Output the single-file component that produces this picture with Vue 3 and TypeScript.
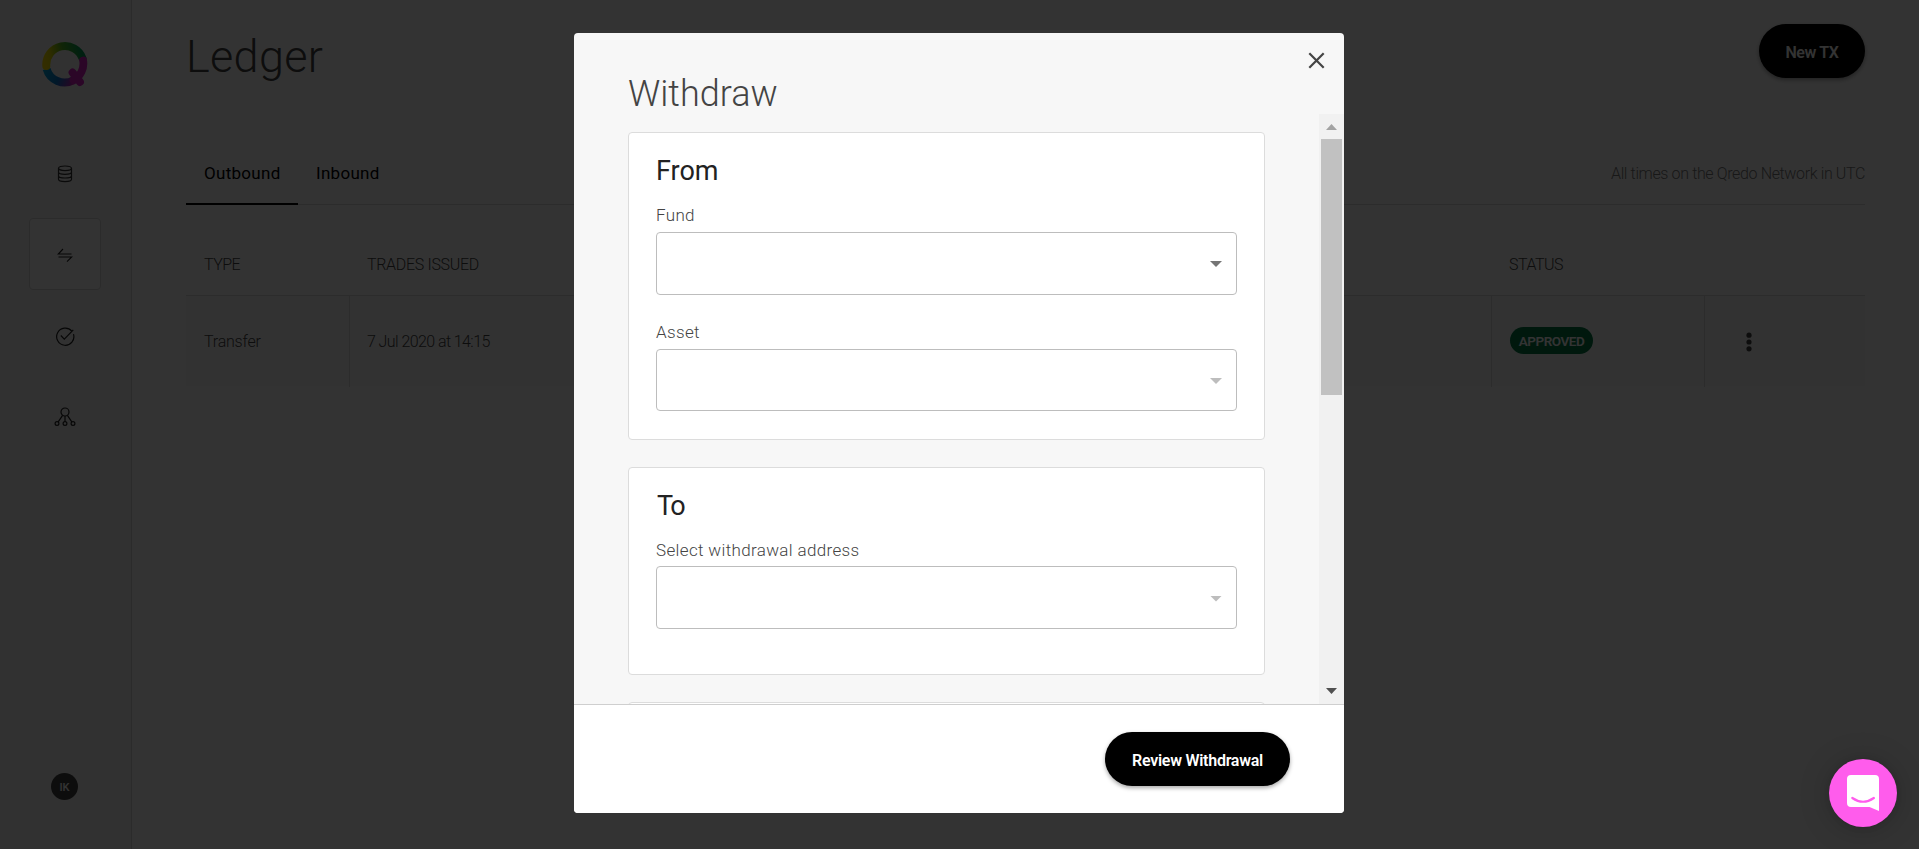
<script setup lang="ts">
interface Field {
  label: string
  disabled: boolean
  height: number
}

interface Section {
  title: string
  tone: string
  fields: Field[]
}

const sections: Section[] = [
  {
    title: 'From',
    tone: 'from',
    fields: [
      { label: 'Fund', disabled: false, height: 63 },
      { label: 'Asset', disabled: true, height: 62 },
    ],
  },
  {
    title: 'To',
    tone: 'to',
    fields: [{ label: 'Select withdrawal address', disabled: true, height: 63 }],
  },
]
</script>

<template>
  <div class="app">
    <aside class="sidebar">
      <svg class="logo" width="46" height="46" viewBox="0 0 46 46" fill="none">
        <defs>
          <linearGradient id="q-top" x1="4" y1="26" x2="41" y2="16" gradientUnits="userSpaceOnUse">
            <stop offset="0" stop-color="#ffe100" />
            <stop offset="0.2" stop-color="#e3dc00" />
            <stop offset="0.55" stop-color="#4fb521" />
            <stop offset="1" stop-color="#009d57" />
          </linearGradient>
          <linearGradient id="q-low" x1="4" y1="28" x2="32" y2="40" gradientUnits="userSpaceOnUse">
            <stop offset="0" stop-color="#00a0d8" />
            <stop offset="0.5" stop-color="#0878cc" />
            <stop offset="1" stop-color="#c51fb4" />
          </linearGradient>
        </defs>
        <path d="M4.600 28 A18.700 18.700 0 0 0 31.500 39.200" stroke="url(#q-low)" stroke-width="8" />
        <path d="M4.300 25 A18.700 18.700 0 0 1 40.600 17.500" stroke="url(#q-top)" stroke-width="8" stroke-linecap="round" />
        <path d="M41.100 19.500 A18.700 18.700 0 0 1 31.500 39.200 M30.500 31.500 L38 41" stroke="#d41fc0" stroke-width="7.800" stroke-linecap="round" />
      </svg>
      <nav class="nav">
        <a class="nav-item">
          <svg width="16" height="18" viewBox="0 0 16 18" fill="none" stroke="#333" stroke-width="1.200">
            <ellipse cx="8" cy="3.300" rx="6.500" ry="2.300" />
            <path d="M1.500 3.300v11c0 1.300 2.900 2.300 6.500 2.300s6.500-1 6.500-2.300v-11M1.500 7c0 1.300 2.900 2.300 6.500 2.300s6.500-1 6.500-2.300M1.500 10.700c0 1.300 2.900 2.300 6.500 2.300s6.500-1 6.500-2.300" />
          </svg>
        </a>
        <a class="nav-item active">
          <svg width="16" height="16" viewBox="0 0 16 16" fill="none" stroke="#222" stroke-width="1.100">
            <path d="M14.500 7H1.300L6 2" />
            <path d="M1.500 10h13.200L10 14.700" />
          </svg>
        </a>
        <a class="nav-item">
          <svg width="20" height="20" viewBox="0 0 20 20" fill="none" stroke="#222" stroke-width="1.200">
            <path d="M16.800 5.100A8.600 8.600 0 1 0 18.500 8.200" />
            <path d="M5.800 9.500l3.500 3.600 9-9.200" />
          </svg>
        </a>
        <a class="nav-item">
          <svg width="22" height="20" viewBox="0 0 22 20" fill="none" stroke="#222" stroke-width="1.200">
            <circle cx="11" cy="5" r="4" />
            <circle cx="3" cy="16.500" r="1.900" />
            <circle cx="11" cy="16.500" r="1.900" />
            <circle cx="19" cy="16.500" r="1.900" />
            <path d="M8.600 8.300L4.200 14.900M11 9v5.500M13.400 8.300l4.400 6.600" />
          </svg>
        </a>
      </nav>
      <div class="avatar">IK</div>
    </aside>

    <main class="main">
      <header class="header">
        <h1 class="title">Ledger</h1>
        <button class="btn new-tx">New TX</button>
      </header>
      <div class="tabs">
        <span class="tab outbound selected">Outbound</span>
        <span class="tab">Inbound</span>
        <span class="note">All times on the Qredo Network in UTC</span>
      </div>
      <div class="row head">
        <span class="type">TYPE</span>
        <span class="trades">TRADES ISSUED</span>
        <span class="status">STATUS</span>
        <span></span>
      </div>
      <div class="row body">
        <span class="cell">Transfer</span>
        <span class="cell date">7 Jul 2020 at 14:15</span>
        <span class="cell"><b class="badge">APPROVED</b></span>
        <span class="cell dots">
          <svg width="6" height="20" viewBox="0 0 6 20" fill="#444">
            <circle cx="3" cy="3.200" r="2.600" />
            <circle cx="3" cy="10" r="2.600" />
            <circle cx="3" cy="16.800" r="2.600" />
          </svg>
        </span>
      </div>
    </main>

    <div class="overlay">
      <section class="modal">
        <header class="modal-head">
          <h2 class="modal-title">Withdraw</h2>
          <svg class="close" width="17" height="17" viewBox="0 0 17 17" fill="none" stroke="#444" stroke-width="2.200">
            <path d="M1.300 1.300l14.400 14.400M15.700 1.300L1.300 15.700" />
          </svg>
        </header>
        <div class="modal-body">
          <div class="cards">
            <div v-for="s in sections" :key="s.title" class="card" :class="s.tone">
              <h3 class="card-title">{{ s.title }}</h3>
              <div v-for="f in s.fields" :key="f.label" class="field">
                <label class="label">{{ f.label }}</label>
                <div class="select" :class="{ disabled: f.disabled }" :style="{ height: f.height + 'px' }">
                  <i class="caret"></i>
                </div>
              </div>
            </div>
            <div class="card next"></div>
          </div>
          <div class="scrollbar">
            <i class="arrow up"></i>
            <i class="thumb"></i>
            <i class="arrow down"></i>
          </div>
        </div>
        <footer class="modal-foot">
          <button class="btn review">Review Withdrawal</button>
        </footer>
      </section>
    </div>

    <div class="chat">
      <svg width="34" height="38" viewBox="0 0 34 38">
        <path d="M5 1h24a4 4 0 0 1 4 4v32l-9.500-4H5a4 4 0 0 1-4-4V5a4 4 0 0 1 4-4z" fill="#fff" />
        <path d="M6.300 24q10.700 7.500 21.600 0" fill="none" stroke="#ff5cec" stroke-width="2.200" stroke-linecap="round" />
      </svg>
    </div>
  </div>
</template>

<style>
body {
  background: #fff;
  overflow: hidden;
}
</style>

<style scoped>
.app {
  display: flex;
  height: 849px;
  position: relative;
  overflow: hidden;
  background: #fff;
  font-family: Roboto, 'Liberation Sans', sans-serif;
  font-weight: 340;
  color: #444;
  white-space: nowrap;
}
.app *,
.app {
  box-sizing: border-box;
}
h1,
h2,
h3 {
  margin: 0;
  font-weight: 340;
}
.sidebar {
  width: 132px;
  flex: none;
  display: flex;
  flex-direction: column;
  align-items: center;
  padding: 41px 2px 49px 0;
  background: #f5f5f5;
  border-right: 1px solid #d8d8d8;
}
.logo {
  flex: none;
}
.nav {
  margin-top: 50px;
  display: flex;
  flex-direction: column;
  gap: 9px;
}
.nav-item {
  width: 72px;
  height: 72px;
  display: flex;
  align-items: center;
  justify-content: center;
  padding-top: 1px;
  border-radius: 4px;
}
.nav-item.active {
  background: #fff;
  border: 1px solid #d8d8d8;
}
.avatar {
  margin-top: auto;
  width: 27px;
  height: 27px;
  border-radius: 50%;
  background: #444;
  color: #fff;
  font-size: 11px;
  line-height: 29px;
  font-weight: 500;
  text-align: center;
}
.main {
  flex: 1;
  padding: 24px 54px 0;
}
.header {
  display: flex;
  justify-content: space-between;
  align-items: flex-start;
  height: 121px;
}
.title {
  font-size: 45px;
  line-height: 54px;
  padding-top: 6px;
  letter-spacing: 0.3px;
}
.btn {
  height: 54px;
  border: 0;
  border-radius: 27px;
  padding: 2px 0 0;
  background: #000;
  color: #fff;
  font-family: inherit;
  font-size: 16px;
  font-weight: 600;
  box-shadow: 0 2px 4px rgba(0, 0, 0, 0.35);
}
.new-tx {
  width: 106px;
  letter-spacing: -0.35px;
}
.tabs {
  display: flex;
  height: 60px;
  line-height: 56px;
  border-bottom: 1px solid #dcdcdc;
}
.tab {
  height: 60px;
  padding: 0 0 0 18px;
  font-size: 17px;
  font-weight: 400;
  letter-spacing: 0.3px;
  color: #000;
}
.outbound {
  width: 112px;
}
.selected {
  border-bottom: 2px solid #000;
}
.note {
  margin-left: auto;
  padding-top: 1px;
  font-size: 16px;
  letter-spacing: -0.37px;
  color: #777;
}
.row {
  display: grid;
  grid-template-columns: 164px 1142px 213px 160px;
  font-size: 16px;
}
.head {
  height: 91px;
  line-height: 28px;
  padding-top: 46px;
  border-bottom: 1px solid #dcdcdc;
}
.head > span {
  padding-left: 18px;
}
.head > .trades,
.head > .status {
  padding-left: 17px;
}
.type,
.status {
  letter-spacing: -0.5px;
}
.trades {
  letter-spacing: -0.32px;
}
.body {
  height: 90px;
  line-height: 91px;
  background: #fafafa;
}
.cell {
  padding-left: 18px;
  letter-spacing: -0.2px;
  border-right: 1px solid #dcdcdc;
}
.cell:last-child {
  border-right: 0;
}
.date {
  padding-left: 17px;
  letter-spacing: -0.58px;
}
.badge {
  display: block;
  width: 83px;
  height: 27px;
  margin-top: 31px;
  border-radius: 14px;
  background: #007844;
  color: #fff;
  font-size: 13.500px;
  font-weight: 600;
  line-height: 29px;
  text-align: center;
  letter-spacing: -0.45px;
}
.dots {
  display: flex;
  align-items: center;
  padding-left: 41px;
}
.overlay {
  position: absolute;
  inset: 0;
  display: flex;
  justify-content: center;
  align-items: flex-start;
  padding: 33px 1px 0 0;
  background: rgba(0, 0, 0, 0.8);
}
.modal {
  width: 770px;
  height: 780px;
  display: flex;
  flex-direction: column;
  border-radius: 4px;
  overflow: hidden;
  background: #f7f7f7;
}
.modal-head {
  height: 81px;
  flex: none;
  display: flex;
  justify-content: space-between;
  padding: 0 19px 0 54px;
}
.modal-title {
  font-size: 36px;
  line-height: 44px;
  padding-top: 39px;
}
.close {
  margin-top: 19px;
}
.modal-body {
  height: 590px;
  flex: none;
  display: flex;
  overflow: hidden;
}
.cards {
  flex: 1;
  display: flex;
  flex-direction: column;
  gap: 27px;
  padding: 18px 54px 0;
}
.card {
  flex: none;
  padding: 21px 27px 0;
  border: 1px solid #dcdcdc;
  border-radius: 4px;
  background: #fff;
}
.from {
  height: 308px;
}
.to {
  height: 208px;
}
.next {
  height: 120px;
}
.card-title {
  font-size: 27px;
  line-height: 34px;
  font-weight: 400;
  letter-spacing: 0;
  color: #222;
}
.to .card-title {
  padding-left: 1px;
  letter-spacing: -1.500px;
}
.field {
  padding-top: 10px;
  margin-bottom: 10px;
}
.field + .field {
  padding-top: 16px;
}
.label {
  display: block;
  font-size: 17px;
  line-height: 24px;
  height: 34px;
  padding-top: 5px;
  letter-spacing: 0.350px;
}
.from .field + .field {
  padding-top: 15px;
}
.from .field + .field .label {
  height: 29px;
  padding-top: 0;
}
.to .label {
  height: 33px;
}
.select {
  display: flex;
  align-items: center;
  justify-content: flex-end;
  padding-right: 14px;
  border: 1px solid #bdbdbd;
  border-radius: 4px;
  background: #fff;
}
.caret {
  width: 12px;
  height: 6px;
  margin-top: 1px;
  background: #757575;
  clip-path: polygon(0 0, 100% 0, 50% 100%);
}
.disabled .caret {
  margin-top: 2px;
  background: #bdbdbd;
}
.scrollbar {
  width: 25px;
  flex: none;
  display: flex;
  flex-direction: column;
  align-items: center;
  padding: 10px 0;
  background: #f1f1f1;
}
.arrow {
  width: 11px;
  height: 6px;
}
.up {
  background: #a3a3a3;
  clip-path: polygon(50% 0, 100% 100%, 0 100%);
}
.down {
  margin-top: auto;
  background: #505050;
  clip-path: polygon(0 0, 100% 0, 50% 100%);
}
.thumb {
  width: 21px;
  height: 256px;
  margin-top: 9px;
  background: #c1c1c1;
}
.modal-foot {
  flex: 1;
  display: flex;
  justify-content: flex-end;
  align-items: flex-start;
  padding: 27px 54px 0 0;
  border-top: 1px solid #cfcfcf;
  background: #fff;
}
.review {
  width: 185px;
  letter-spacing: -0.260px;
}
.chat {
  position: absolute;
  right: 22px;
  bottom: 22px;
  width: 68px;
  height: 68px;
  display: flex;
  align-items: center;
  justify-content: center;
  border-radius: 50%;
  background: #ff5cec;
  box-shadow: 0 1px 6px rgba(0, 0, 0, 0.1), 0 2px 32px rgba(0, 0, 0, 0.2);
}
</style>
